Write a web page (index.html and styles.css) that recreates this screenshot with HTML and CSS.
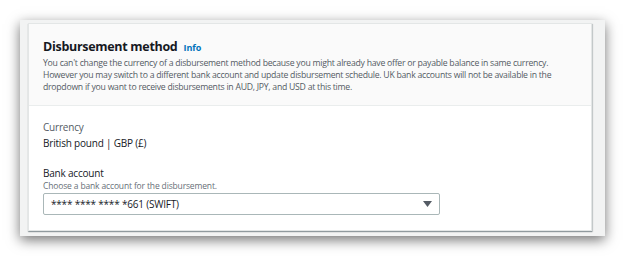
FILE: index.html
```html
<!DOCTYPE html>
<html lang="en">
<head>
  <meta charset="UTF-8" />
  <title>Disbursement method</title>
  <link rel="stylesheet" href="styles.css">
</head>
<body>
  <div class="frame">
    <div class="card">
      <div class="card-header">
        <h2>Disbursement method <a href="#" class="info">Info</a></h2>
        <p class="description">
          You can't change the currency of a disbursement method because you might already have offer or payable balance in same currency.<br>
          However you may switch to a different bank account and update disbursement schedule. UK bank accounts will not be available in the<br>
          dropdown if you want to receive disbursements in AUD, JPY, and USD at this time.
        </p>
      </div>

      <div class="card-body">
        <div class="field">
          <div class="field-label muted">Currency</div>
          <div class="field-value">British pound | GBP (£)</div>
        </div>

        <div class="field">
          <div class="field-label">Bank account</div>
          <div class="field-hint">Choose a bank account for the disbursement.</div>
          <div class="select">
            <span>**** **** **** *661 (SWIFT)</span>
            <svg class="caret" width="9" height="6" viewBox="0 0 9 6"><path d="M0 0h9L4.5 6z" fill="#545b64"/></svg>
          </div>
        </div>
      </div>
    </div>
  </div>
</body>
</html>
```

FILE: styles.css
```css
* {
  margin: 0;
  padding: 0;
  box-sizing: border-box;
}

body {
  background: #fff;
  padding: 20px;
  font-family: 'Open Sans', 'Liberation Sans', Arial, sans-serif;
  color: #16191f;
}

.frame {
  width: 585px;
  height: 216px;
  background: #f2f3f3;
  box-shadow: 0 4px 12px rgba(0, 0, 0, 0.55);
  padding: 3px 13px 5px 8px;
}

.card {
  height: 100%;
  background: #fff;
  border: 1px solid #e3e6e6;
  box-shadow: 0 1px 1px 0 rgba(0, 28, 36, 0.3), 1px 1px 1px 0 rgba(0, 28, 36, 0.15);
  display: flex;
  flex-direction: column;
}

.card-header {
  background: #fafafa;
  border-bottom: 1px solid #eaeded;
  padding: 15px 14px 12px;
}

h2 {
  font-size: 12.5px;
  font-weight: bold;
  letter-spacing: -0.3px;
  line-height: 16px;
  margin-bottom: 2px;
}

.info {
  color: #0073bb;
  font-size: 9px;
  font-weight: bold;
  letter-spacing: 0;
  text-decoration: none;
  margin-left: 3px;
}

.description {
  color: #545b64;
  font-size: 8.7px;
  letter-spacing: -0.26px;
  line-height: 11.8px;
  white-space: nowrap;
}

.card-body {
  padding: 14px 14px 0;
  display: flex;
  flex-direction: column;
  gap: 16px;
}

.field-label {
  font-size: 10px;
  letter-spacing: -0.2px;
  line-height: 14px;
}

.field-label.muted {
  color: #545b64;
}

.field-value {
  font-size: 10px;
  letter-spacing: -0.2px;
  line-height: 14px;
  margin-top: 2px;
}

.field-hint {
  color: #687078;
  font-size: 8.5px;
  letter-spacing: -0.15px;
  line-height: 12px;
  margin-bottom: 1px;
}

.select {
  width: 397px;
  height: 22px;
  border: 1px solid #aab7b8;
  border-radius: 2px;
  display: flex;
  align-items: center;
  justify-content: space-between;
  padding: 0 7px;
  font-size: 10px;
  letter-spacing: -0.2px;
}
```
